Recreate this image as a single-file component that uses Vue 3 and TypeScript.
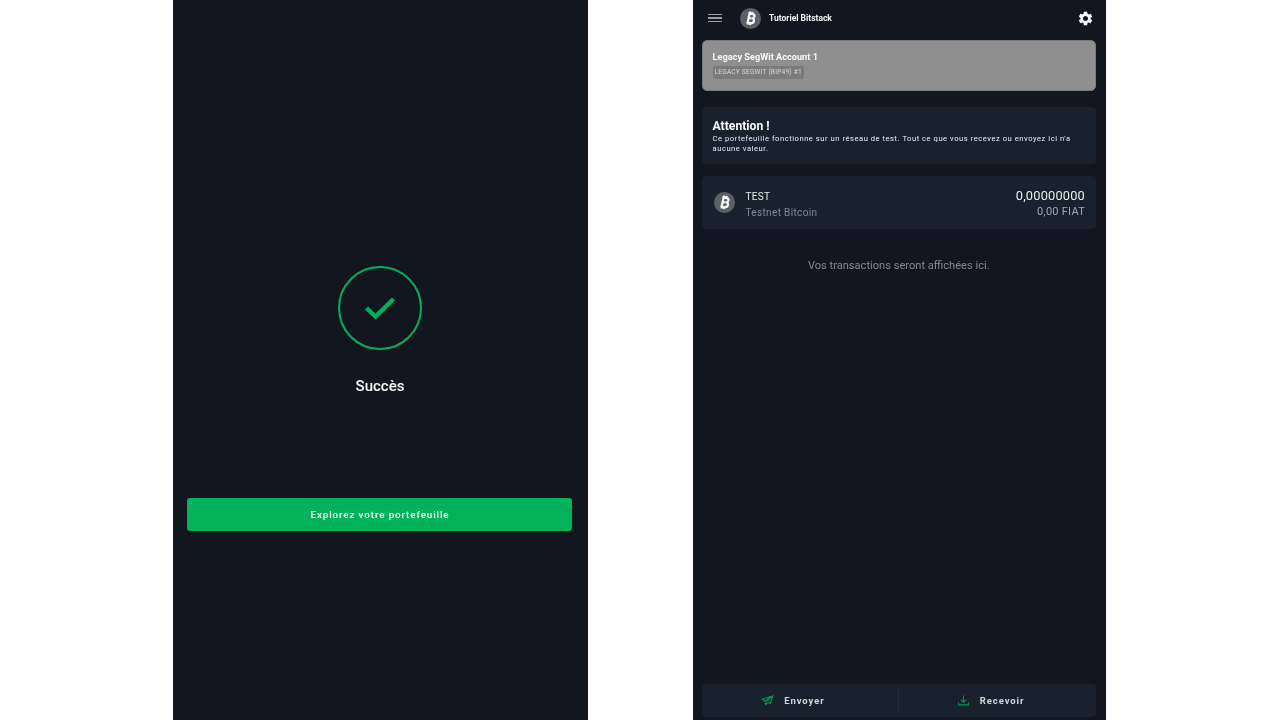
<script setup lang="ts">
const btcPath = 'M7.6 5.8h4.2c1.7 0 2.8.9 2.8 2.3 0 1.2-.8 2-1.9 2.3 1.4.2 2.4 1.1 2.4 2.5 0 1.7-1.4 2.8-3.3 2.8H7.6M9 5.8v10M9 10.7h3.2M9.4 3.8v2M11.9 3.8v2M9.4 15.8v2M11.9 15.8v2'
</script>

<template>
  <div class="page">
    <section class="phone phone-left">
      <div class="success-ring">
        <svg class="check" viewBox="0 0 32 24" aria-hidden="true">
          <path d="M2.5 12l9 8.5L29.5 3" />
        </svg>
      </div>
      <h1 class="success-title">Succès</h1>
      <button class="explore" type="button">Explorez votre portefeuille</button>
    </section>

    <section class="phone phone-right">
      <header class="topbar">
        <div class="menu" aria-hidden="true"><i></i><i></i><i></i></div>
        <span class="coin coin-small">
          <svg viewBox="0 0 22 22" aria-hidden="true"><path :d="btcPath" /></svg>
        </span>
        <span class="wallet-name">Tutoriel Bitstack</span>
        <svg class="gear" viewBox="0 0 24 24" aria-hidden="true">
          <path d="M19.14 12.94c.04-.3.06-.61.06-.94 0-.32-.02-.64-.07-.94l2.03-1.58c.18-.14.23-.41.12-.61l-1.92-3.32c-.12-.22-.37-.29-.59-.22l-2.39.96c-.5-.38-1.03-.7-1.62-.94l-.36-2.54c-.04-.24-.24-.41-.48-.41h-3.84c-.24 0-.43.17-.47.41l-.36 2.54c-.59.24-1.13.57-1.62.94l-2.39-.96c-.22-.08-.47 0-.59.22L2.74 8.87c-.12.21-.08.47.12.61l2.03 1.58c-.05.3-.09.63-.09.94s.02.64.07.94l-2.03 1.58c-.18.14-.23.41-.12.61l1.92 3.32c.12.22.37.29.59.22l2.39-.96c.5.38 1.03.7 1.62.94l.36 2.54c.05.24.24.41.48.41h3.84c.24 0 .44-.17.47-.41l.36-2.54c.59-.24 1.13-.56 1.62-.94l2.39.96c.22.08.47 0 .59-.22l1.92-3.32c.12-.22.07-.47-.12-.61l-2.01-1.58zM12 15.6c-1.98 0-3.6-1.62-3.6-3.6s1.62-3.6 3.6-3.6 3.6 1.62 3.6 3.6-1.62 3.6-3.6 3.6z" />
        </svg>
      </header>

      <div class="account">
        <div class="account-name">Legacy SegWit Account 1</div>
        <span class="account-tag">LEGACY SEGWIT (BIP49) #1</span>
      </div>

      <div class="warning">
        <h2>Attention !</h2>
        <p>Ce portefeuille fonctionne sur un réseau de test. Tout ce que vous recevez ou envoyez ici n'a aucune valeur.</p>
      </div>

      <div class="asset">
        <span class="coin coin-list">
          <svg viewBox="0 0 22 22" aria-hidden="true"><path :d="btcPath" /></svg>
        </span>
        <div class="asset-info">
          <div class="asset-code">TEST</div>
          <div class="asset-name">Testnet Bitcoin</div>
        </div>
        <div class="asset-amounts">
          <div class="asset-balance">0,00000000</div>
          <div class="asset-fiat">0,00 FIAT</div>
        </div>
      </div>

      <p class="empty">Vos transactions seront affichées ici.</p>

      <nav class="actions">
        <button class="action" type="button">
          <svg viewBox="0 0 14 12" aria-hidden="true"><path d="M13 1L1 4.6l3.2 1.8L5 10.6l2.4-2.5 2.6 1.3L13 1zM4.2 6.4L13 1 6 7" /></svg>
          <span>Envoyer</span>
        </button>
        <i class="divider"></i>
        <button class="action" type="button">
          <svg viewBox="0 0 14 12" aria-hidden="true"><path d="M7 .5v7.2M4 5l3 3 3-3M1.5 8.2v2.6h11V8.2" /></svg>
          <span>Recevoir</span>
        </button>
      </nav>
    </section>
  </div>
</template>

<style>
html, body { margin: 0; background: #ffffff; }
</style>

<style scoped>
.page {
  display: flex;
  gap: 105px;
  width: 1280px;
  height: 720px;
  padding-left: 173px;
  box-sizing: border-box;
  overflow: hidden;
  background: #ffffff;
  font-family: Roboto, "Liberation Sans", sans-serif;
}
.phone {
  height: 720px;
  background: #12161f;
  box-sizing: border-box;
  display: flex;
  flex-direction: column;
  filter: blur(.3px);
}
.phone-left {
  width: 415px;
  align-items: center;
  padding: 266px 1px 0 0;
}
.phone-right {
  width: 413px;
  padding: 0 10px 3px 8.5px;
}
.success-ring {
  width: 84px;
  height: 84px;
  box-sizing: border-box;
  border: 2px solid #00b35a;
  border-radius: 50%;
  display: flex;
  align-items: center;
  justify-content: center;
}
.check { width: 32px; height: 24px; }
.check path { fill: none; stroke: #00b35a; stroke-width: 4.4; }
.success-title {
  margin: 26px 0 0;
  font-size: 15px;
  line-height: 20px;
  font-weight: 500;
  color: #f8f9f9;
}
.explore {
  margin: 102px 1px 0 0;
  width: 385px;
  height: 33px;
  border: 0;
  border-radius: 3px;
  background: #00b35a;
  color: #ffffff;
  padding: 0 0 0 1px;
  font: 500 9.8px Roboto, "Liberation Sans", sans-serif;
  letter-spacing: .9px;
}
.topbar {
  height: 36px;
  margin-bottom: 4px;
  display: flex;
  align-items: center;
}
.menu {
  width: 14px;
  margin-left: 6.5px;
  display: flex;
  flex-direction: column;
  gap: 2px;
}
.menu i { display: block; height: 1.6px; background: #9a9da1; }
.coin {
  display: flex;
  align-items: center;
  justify-content: center;
  flex: none;
  border-radius: 50%;
  background: #5c6066;
}
.coin svg { width: 100%; height: 100%; transform: rotate(12deg); }
.coin path { fill: none; stroke: #f8f8f8; stroke-width: 2.3; }
.coin-small { width: 21px; height: 21px; margin-left: 18px; }
.wallet-name {
  margin-left: 8px;
  font-size: 8.5px;
  font-weight: 700;
  color: #f4f5f5;
}
.gear { width: 17px; height: 17px; margin-left: auto; margin-right: 2.5px; }
.gear path { fill: #f8f8f8; }
.account {
  height: 51px;
  box-sizing: border-box;
  padding: 10px 10px 0;
  border: 1px solid #77797c;
  border-radius: 5px;
  background: #8f8f8f;
}
.account-name {
  font-size: 9.2px;
  line-height: 12px;
  font-weight: 700;
  color: #f8f8f8;
}
.account-tag {
  display: block;
  width: max-content;
  margin-top: 3px;
  padding: 2px;
  border-radius: 2px;
  background: #7b7b7b;
  font-size: 6.6px;
  line-height: 9px;
  letter-spacing: .2px;
  color: #d8d8d8;
}
.warning {
  margin-top: 16px;
  height: 57px;
  box-sizing: border-box;
  padding: 13px 11px 0;
  border-radius: 4px;
  background: #19222c;
}
.warning h2 {
  margin: 0;
  font-size: 12.2px;
  line-height: 13px;
  font-weight: 700;
  color: #fafafa;
}
.warning p {
  margin: 1px 0 0;
  width: 370px;
  font-size: 7.6px;
  line-height: 9.5px;
  letter-spacing: .53px;
  color: #eceded;
}
.asset {
  margin-top: 12px;
  height: 53px;
  box-sizing: border-box;
  padding: 2px 11px 0 12px;
  border-radius: 4px;
  background: #19222c;
  display: flex;
  align-items: center;
}
.coin-list { width: 21px; height: 21px; margin-top: -2px; }
.asset-info { margin-left: 11px; padding-top: 3px; }
.asset-code { font-size: 10px; line-height: 15px; color: #eceded; letter-spacing: .3px; }
.asset-name { font-size: 10px; line-height: 17px; color: #85888d; letter-spacing: .35px; }
.asset-amounts { margin-left: auto; padding-top: 1px; text-align: right; }
.asset-balance { font-size: 12.8px; line-height: 16px; color: #eceded; letter-spacing: .2px; }
.asset-fiat { font-size: 11px; line-height: 16px; color: #a4a7aa; letter-spacing: .25px; }
.empty {
  margin: 29px 0 0;
  text-align: center;
  font-size: 11.1px;
  line-height: 16px;
  color: #85888d;
}
.actions {
  margin-top: auto;
  height: 33px;
  border-radius: 4px;
  background: #19222c;
  display: flex;
  align-items: center;
}
.action {
  flex: 1;
  height: 100%;
  border: 0;
  padding: 0 14px 0 0;
  background: transparent;
  display: flex;
  align-items: center;
  justify-content: center;
  gap: 10px;
  font: 700 9.5px Roboto, "Liberation Sans", sans-serif;
  letter-spacing: .9px;
  color: #d4d6d8;
}
.action svg { width: 13px; height: 11px; }
.action path { fill: none; stroke: #00964c; stroke-width: 1.2; }
.divider { width: 1px; height: 22px; background: #262e38; }
</style>
